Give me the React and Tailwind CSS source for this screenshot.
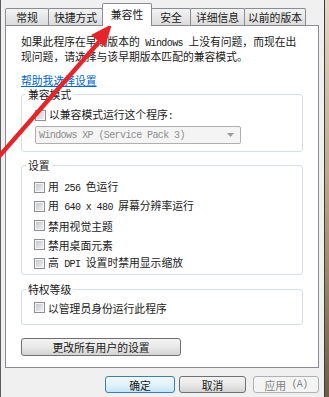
import React from 'react'

const M = ({ children }) => (
  <span className="whitespace-pre font-['Liberation_Mono',monospace] text-[10px] tracking-[-0.6px]">{children}</span>
)

function Box() {
  return (
    <span className="flex h-[11px] w-[11px] shrink-0 border border-[#8e8f8f] bg-[#f6f6f6] p-px">
      <span className="flex-1 bg-linear-to-br from-[#c4c8ce] to-[#f0f0f0]" />
    </span>
  )
}

function Check({ children, className = '' }) {
  return (
    <div className={`flex h-[19px] items-center gap-[3px] ${className}`}>
      <Box />
      <span className="whitespace-nowrap leading-[12px]">{children}</span>
    </div>
  )
}

function Group({ title, className = '', children }) {
  return (
    <fieldset className={`rounded-[3px] border border-[#d5dfe5] ${className}`}>
      <legend className="ml-[4px] px-[2px] leading-[12px]">{title}</legend>
      {children}
    </fieldset>
  )
}

const tabs = [
  ['常规', 44],
  ['快捷方式', 55],
  ['兼容性', 50, true],
  ['安全', 40],
  ['详细信息', 55],
  ['以前的版本', 62],
]

function Button({ children, kind = 'normal', className = '' }) {
  const look = {
    normal: 'border-[#707070] bg-linear-to-b from-[#f3f3f3] via-[#e9e9e9] to-[#d3d3d3]',
    default: 'border-[#3c7fb1] bg-linear-to-b from-[#f1f9fe] via-[#e3f3fc] to-[#c4e5f8]',
    disabled: 'border-[#adb2b5] bg-[#f4f4f4] text-[#838383]',
  }[kind]
  return (
    <div className={`flex items-center justify-center rounded-[3px] border leading-[12px] ${look} ${className}`}>
      {children}
    </div>
  )
}

export default function App() {
  return (
    <div className="relative flex h-[397px] w-[329px] overflow-hidden bg-[#f0f0f0] font-['Noto_Sans_CJK_SC',sans-serif] text-[10.8px] text-[#1a1a1a]">
      <div className="w-px bg-[#5e5e5e]" />

      <div className="flex w-[323px] flex-col pl-[4px] pt-[3px]">
        {/* tabs */}
        <div className="flex h-[22px] items-end">
          {tabs.map(([label, w, sel], i) => (
            <div
              key={label}
              style={{ width: w }}
              className={
                sel
                  ? 'relative z-10 -mb-px -ml-px flex h-[23px] items-start justify-center rounded-t-[2px] border border-b-0 border-[#898c95] bg-white pt-[4px] leading-[12px]'
                  : `flex h-[17px] items-center justify-center rounded-t-[2px] border border-b-0 border-[#898c95] bg-linear-to-b from-[#f4f4f4] to-[#dcdcdc] leading-[12px] ${i ? '-ml-px' : ''}`
              }
            >
              {label}
            </div>
          ))}
        </div>

        {/* panel */}
        <div className="flex h-[343px] w-[314px] flex-col border border-[#898c95] bg-white px-[15px]">
          <p className="whitespace-nowrap pt-[9px] leading-[12px]">
            如果此程序在早期版本的<M> Windows </M>上没有问题，而现在出
            <br />
            现问题，请选择与该早期版本匹配的兼容模式。
          </p>
          <a className="mt-[12px] self-start leading-[12px] text-[#0066cc] underline">帮助我选择设置</a>

          <Group title="兼容模式" className="mt-[2px]">
            <div className="pb-[7px] pl-[13px]">
              <Check className="mt-[6px]">
                以兼容模式运行这个程序<M>:</M>
              </Check>
              <div className="mt-px flex h-[18px] w-[206px] items-center justify-between rounded-[2px] border border-[#afafaf] bg-[#f4f4f4] pl-[3px] pr-[6px] text-[#8d8d8d]">
                <M>Windows XP (Service Pack 3)</M>
                <svg width="7" height="4" viewBox="0 0 7 4">
                  <polygon points="0,0 7,0 3.5,4" fill="#9a9a9a" />
                </svg>
              </div>
            </div>
          </Group>

          <Group title="设置" className="mt-[7px]">
            <div className="mt-[7px] pb-px pl-[12px]">
              <Check>
                用<M> 256 </M>色运行
              </Check>
              <Check>
                用<M> 640 x 480 </M>屏幕分辨率运行
              </Check>
              <Check>禁用视觉主题</Check>
              <Check>禁用桌面元素</Check>
              <Check>
                高<M> DPI </M>设置时禁用显示缩放
              </Check>
            </div>
          </Group>

          <Group title="特权等级" className="mt-[8px]">
            <div className="mt-[3px] pb-[7px] pl-[12px]">
              <Check>以管理员身份运行此程序</Check>
            </div>
          </Group>

          <Button className="mt-[13px] h-[18px] w-[160px]">更改所有用户的设置</Button>
        </div>

        {/* dialog buttons */}
        <div className="mt-[8px] flex justify-end pr-[5px]">
          <Button kind="default" className="mr-[4px] h-[17px] w-[70px]">确定</Button>
          <Button className="mr-[7px] h-[17px] w-[67px]">取消</Button>
          <Button kind="disabled" className="h-[17px] w-[66px]">
            应用<M> (A)</M>
          </Button>
        </div>
      </div>

      <div className="w-px bg-[#3d3d3d]" />
      <div className="flex-1 bg-linear-to-b from-[#e4d8c4] via-[#b9a27f] to-[#6f5c42]" />

      {/* red arrow drawn over the dialog */}
      <svg className="pointer-events-none absolute inset-0" width="329" height="397" viewBox="0 0 329 397">
        <line x1="-4" y1="160" x2="99" y2="42" stroke="#e4262b" strokeWidth="4.5" />
        <polygon points="112,24 105,47 91,35" fill="#e4262b" />
      </svg>
    </div>
  )
}
